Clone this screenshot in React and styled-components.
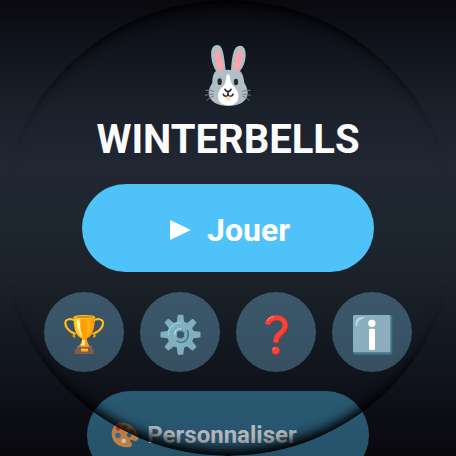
import React from "react";
import styled, { createGlobalStyle } from "styled-components";

/* ---------------- GLOBAL ---------------- */

const GlobalStyle = createGlobalStyle`
  * { box-sizing: border-box; }
  body {
    margin: 0;
    background: #08080e;
    font-family: Roboto, sans-serif;
    overflow: hidden;
  }
`;

/* ---------------- LAYOUT ---------------- */

const Screen = styled.main`
  position: relative;
  height: 100vh;
  overflow: hidden;
  display: flex;
  flex-direction: column;
  align-items: center;
  padding-top: 36px;
  background: linear-gradient(
    to bottom,
    #09090e 0%,
    #10141c 10%,
    #1a212b 24%,
    #202733 36%,
    #1e2630 48%,
    #1a2129 62%,
    #11151d 80%,
    #0e1018 88%,
    #09080d 100%
  );
`;

/* Shade along the top and bottom rim of the round watch face */
const RimShade = styled.div`
  position: absolute;
  inset: 0;
  border-radius: 50%;
  pointer-events: none;
  box-shadow:
    inset 0 10px 11px -6px #000,
    inset 0 -12px 11px -5px #000;
  mask-image: linear-gradient(
    to bottom,
    #000 8%,
    transparent 38%,
    transparent 62%,
    #000 88%
  );
`;

const Title = styled.h1`
  margin: 4px 0 0;
  font-size: 40px;
  line-height: 48px;
  font-weight: 700;
  color: #fbfbfc;
`;

const Rabbit = styled.svg`
  flex-shrink: 0;
  width: 76px;
  height: 76px;
`;

/* ---------------- BUTTONS ---------------- */

const PillButton = styled.button`
  display: flex;
  align-items: center;
  justify-content: center;
  flex-shrink: 0;
  width: ${p => (p.$dim ? "62%" : "64%")};
  height: 88px;
  border: none;
  border-radius: 44px;
  background: ${p => (p.$dim ? "linear-gradient(#295a72, #245068)" : "#4fc3f9")};
  color: ${p => (p.$dim ? "#b4b6bb" : "#fff")};
  font-family: inherit;
  font-size: ${p => (p.$dim ? "24px" : "32px")};
  font-weight: 700;
  gap: ${p => (p.$dim ? "8px" : "16px")};
  padding: ${p => (p.$dim ? "0 48px 0 0" : "4px 0 0 4px")};
  cursor: pointer;
`;

const PlayMark = styled.svg`
  width: 21px;
  height: 20px;
`;

const PaletteMark = styled.svg`
  width: 28px;
  height: 26px;
`;

const RoundRow = styled.nav`
  display: flex;
  gap: 16px;
  margin: 20px 0 19px;
`;

const RoundButton = styled.button`
  display: grid;
  place-items: center;
  width: 80px;
  height: 80px;
  padding: 0;
  border: none;
  border-radius: 50%;
  background: linear-gradient(#3b576a, #365061);
  cursor: pointer;

  svg {
    width: 48px;
    height: 48px;
  }
`;

/* ---------------- DRAWINGS ---------------- */

const RabbitFace = () => (
  <Rabbit viewBox="0 0 228 228" aria-hidden="true">
    <path
      fill="#b0bec5"
      d="M82 27C67 27 61 43 64 64C66 83 72 96 78 105C69 113 67 127 67 140C61 150 56 159 56 171C56 198 87 210 115 210C143 210 173 198 173 171C173 158 168 149 163 140C161 124 158 112 150 105C159 94 166 80 167 58C168 39 161 29 150 29C132 29 126 55 123 102Q114 100 107 102C102 58 99 27 82 27Z"
    />
    <path fill="#ffa4a6" d="M84 43C75 42 75 57 78 76C80 92 85 106 95 105C102 104 100 94 97 80C94 63 92 44 84 43Z" />
    <path fill="#ffa4a6" d="M150 43C142 43 138 59 135 78C132 92 128 104 134 105C144 106 150 91 153 77C156 58 158 43 150 43Z" />
    <path
      fill="#fff"
      d="M110 119C111 113 117 113 119 119C122 133 123 143 130 150C139 158 147 169 145 185C143 201 130 208 115 208C98 208 85 200 84 184C83 168 91 158 100 150C107 143 108 132 110 119Z"
    />
    <ellipse cx="89" cy="137" rx="6.5" ry="10" fill="#2b2b2f" />
    <ellipse cx="138" cy="138" rx="6.5" ry="10" fill="#2b2b2f" />
    <g fill="none" stroke="#2b2b2f" strokeWidth="5" strokeLinecap="round" strokeLinejoin="round">
      <path d="M105 160Q108 167 114 167Q120 167 123 160M114 167V178" />
      <path d="M100 175C102 182 112 183 114 177C117 183 127 182 129 175" />
    </g>
    <path fill="#ffe0b2" d="M107 183Q115 179 123 183L121 193Q115 196 109 193Z" />
    <g fill="none" stroke="#777d80" strokeWidth="3" strokeLinecap="round">
      <path d="M48 163Q60 161 70 166M46 178Q58 173 70 175M51 192Q59 182 70 181" />
      <path d="M180 163Q168 161 158 166M181 178Q170 173 158 175M177 192Q169 182 158 181" />
    </g>
  </Rabbit>
);

const TrophyIcon = () => (
  <svg viewBox="60 60 144 144" aria-hidden="true">
    <g fill="none" strokeLinecap="round">
      <path stroke="#f59b0b" strokeWidth="6" d="M105 98C93 91 78 93 76 103C74 117 88 133 105 137Q97 144 103 146" />
      <path stroke="#f59b0b" strokeWidth="6" d="M160 98C172 91 187 93 189 103C191 117 177 133 160 137Q168 144 162 146" />
      <path stroke="#ffca28" strokeWidth="4" d="M104 97C92 90 78 93 76 102C75 115 88 131 102 135" />
      <path stroke="#ffca28" strokeWidth="4" d="M161 97C173 90 187 93 189 102C190 115 177 131 163 135" />
    </g>
    <path fill="#835a4e" d="M110 175H156V184H161V198H104V184H110Z" />
    <path fill="#9c6b5d" d="M111 174H155V178H111Z" />
    <path fill="#f9a51b" d="M126 146H140C140 161 146 169 149 174Q133 180 117 174C123 166 127 158 126 146Z" />
    <path fill="#fff2a0" d="M127 155H134V172Q128 173 123 171Q128 164 127 155Z" />
    <path fill="#ffa000" d="M100 87C101 125 108 151 133 153C157 151 164 124 165 87Q133 95 100 87Z" />
    <path fill="#ffca28" d="M102 92C103 125 112 147 129 149C120 132 119 112 119 93Z" />
    <path fill="#fff4a0" d="M110 94H121C120 117 121 133 128 144C115 139 111 115 110 94Z" />
    <path fill="#ffb51d" d="M142 95H153C152 118 149 137 139 147C143 130 143 112 142 95Z" />
    <ellipse cx="133" cy="87" rx="33" ry="6" fill="#ffca28" />
    <ellipse cx="133" cy="87" rx="28" ry="3" fill="#df8908" />
    <path fill="#ffca28" d="M123 182H144V190H123Z" />
    <path fill="#f69d19" d="M123 187H144V190H123Z" />
  </svg>
);

const TEETH = [0, 45, 90, 135, 180, 225, 270, 315];

const GearIcon = () => (
  <svg viewBox="63 60 144 144" aria-hidden="true">
    <g fill="#82aec0">
      {TEETH.map(angle => (
        <path
          key={angle}
          transform={`rotate(${angle} 136.5 140)`}
          d="M125 106L128 82Q128 80 130 80H143Q145 80 145 82L148 106Z"
        />
      ))}
    </g>
    <circle cx="136.5" cy="140" r="27" fill="none" stroke="#82aec0" strokeWidth="26" />
    <path fill="none" stroke="#82d4e2" strokeWidth="4" strokeLinecap="round" d="M100 141C100 119 117 104 138 104" />
    <path fill="none" stroke="#2f7889" strokeWidth="4" strokeLinecap="round" d="M157 127C164 140 158 162 139 163Q131 163 126 159" />
    <circle cx="136.5" cy="140" r="14" fill="#82aec0" />
    <path fill="none" stroke="#a9e4ef" strokeWidth="4" strokeLinecap="round" d="M119 140C119 129 127 122 137 122" />
    <circle cx="136.5" cy="140" r="11" fill="#395567" />
  </svg>
);

const QuestionIcon = () => (
  <svg viewBox="66 60 144 144" aria-hidden="true">
    <g fill="none" strokeLinecap="butt" strokeLinejoin="round">
      <path stroke="#ce2f31" strokeWidth="17" d="M114 110C116 96 128 90 140 90C156 90 166 100 166 113C166 124 159 130 151 137C141 145 139 150 139 165" />
      <path stroke="#fb4238" strokeWidth="14" d="M112 109C115 95 127 89 139 89C155 89 165 99 165 112C165 123 158 129 150 136C140 144 138 149 137 163" />
      <path stroke="#ff7967" strokeWidth="4" strokeLinecap="round" d="M112 97Q118 87 130 85" />
    </g>
    <circle cx="137.5" cy="188" r="12" fill="#ce2f31" />
    <circle cx="136.5" cy="187" r="11" fill="#fb4238" />
    <ellipse cx="132" cy="181" rx="4" ry="2" fill="#ff7967" transform="rotate(-35 132 181)" />
  </svg>
);

const InfoIcon = () => (
  <svg viewBox="69 60 144 144" aria-hidden="true">
    <rect x="84" y="81" width="118" height="119" rx="6" fill="#437688" />
    <rect x="84" y="81" width="112" height="112" rx="5" fill="#8cafc0" />
    <path fill="#b5d7e4" d="M92 111C91 93 100 86 115 87C121 88 120 91 114 92C103 94 98 101 97 110C96 116 92 117 92 111Z" />
    <circle cx="140.5" cy="106" r="11" fill="#fff" />
    <rect x="132" y="122" width="18" height="64" rx="4" fill="#fff" />
  </svg>
);

const PaletteIcon = () => (
  <PaletteMark viewBox="104 109 84 78" aria-hidden="true">
    <path
      fill="#bd7c42"
      fillRule="evenodd"
      d="M139 111C119 109 106 126 106 145C107 169 127 186 153 185C166 184 171 178 165 171C159 164 161 160 169 164C177 168 185 166 186 158C183 133 164 113 139 111ZM157 142C164 141 167 148 163 153C159 158 151 153 152 147C152 144 154 142 157 142Z"
    />
    <path fill="none" stroke="#c98a4a" strokeWidth="3" d="M108 143C108 163 128 182 154 182" />
    <circle cx="125" cy="128" r="7" fill="#b0333d" />
    <circle cx="147" cy="123" r="6" fill="#4f7830" />
    <circle cx="168" cy="136" r="6" fill="#3d742f" />
    <circle cx="125" cy="149" r="8" fill="#296a91" />
    <circle cx="142" cy="166" r="7" fill="#c3c2bd" />
  </PaletteMark>
);

/* ---------------- COMPONENT ---------------- */

const SHORTCUTS = [
  { label: "Trophées", Icon: TrophyIcon },
  { label: "Réglages", Icon: GearIcon },
  { label: "Aide", Icon: QuestionIcon },
  { label: "Infos", Icon: InfoIcon }
];

const PlayButton = styled(PillButton)`
  margin-top: 20px;
`;

const App = () => (
  <>
    <GlobalStyle />
    <Screen>
      <RabbitFace />
      <Title>WINTERBELLS</Title>

      <PlayButton type="button">
        <PlayMark viewBox="0 0 21 20" aria-hidden="true">
          <path fill="#fff" d="M0 0L21 10L0 20Z" />
        </PlayMark>
        Jouer
      </PlayButton>

      <RoundRow>
        {SHORTCUTS.map(({ label, Icon }) => (
          <RoundButton key={label} type="button" aria-label={label}>
            <Icon />
          </RoundButton>
        ))}
      </RoundRow>

      <PillButton type="button" $dim>
        <PaletteIcon />
        Personnaliser
      </PillButton>
      <RimShade />
    </Screen>
  </>
);

export default App;
